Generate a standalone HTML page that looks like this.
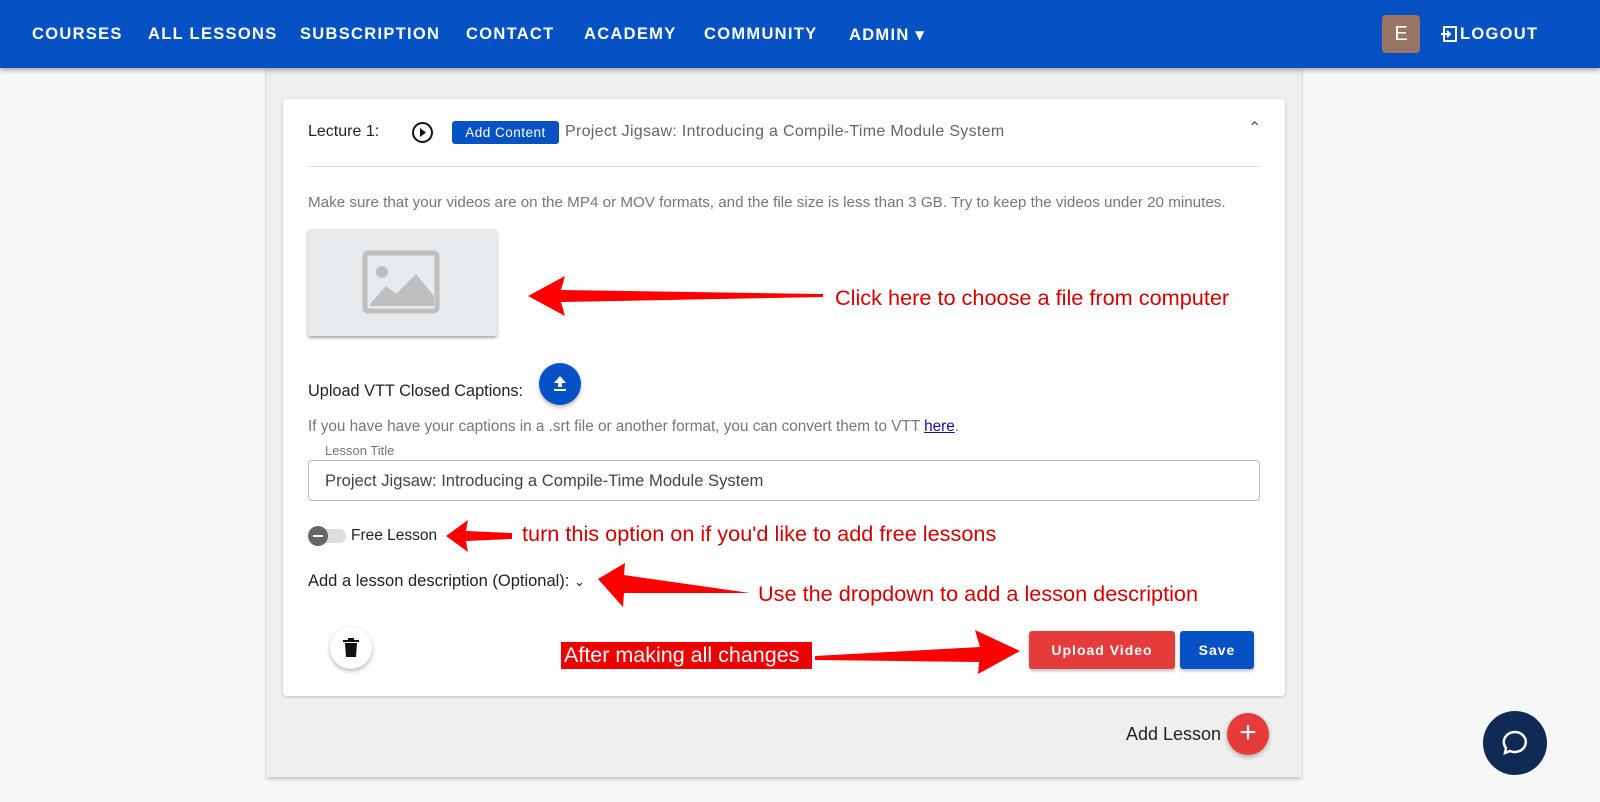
<!DOCTYPE html>
<html><head><meta charset="utf-8"><style>
*{box-sizing:border-box;margin:0;padding:0}
body{width:1600px;height:802px;overflow:hidden;background:#f7f7f7;font-family:"Liberation Sans",sans-serif;position:relative}
.nav{position:absolute;left:0;top:0;width:1600px;height:68px;background:#0652c4;box-shadow:0 2px 5px rgba(0,0,0,.35);z-index:5}
.nav span{position:absolute;top:25px;color:#fff;font-weight:bold;font-size:16.5px;letter-spacing:1.3px}
.panel{position:absolute;left:267px;top:40px;width:1034px;height:737px;background:#efefef;box-shadow:0 2px 4px rgba(0,0,0,.25)}
.card{position:absolute;left:283px;top:99px;width:1002px;height:597px;background:#fff;border-radius:4px;box-shadow:0 1px 3px rgba(0,0,0,.2)}
.t{position:absolute;white-space:nowrap}
.red{color:#d40000;font-size:21.7px}
</style></head><body>
<div class="nav">
<span style="left:32px">COURSES</span><span style="left:148px">ALL LESSONS</span><span style="left:300px">SUBSCRIPTION</span><span style="left:466px">CONTACT</span><span style="left:584px">ACADEMY</span><span style="left:704px">COMMUNITY</span><span style="left:849px">ADMIN ▾</span>
<div style="position:absolute;left:1382px;top:15px;width:38px;height:38px;background:#9a7565;border-radius:4px;color:#fff;font-size:20px;text-align:center;line-height:38px">E</div>
<svg style="position:absolute;left:1440px;top:25px" width="18" height="18" viewBox="0 0 18 18"><rect x="4" y="2" width="12" height="14" fill="none" stroke="#fff" stroke-width="2"/><path d="M1 9h9M7 6l3 3-3 3" stroke="#fff" stroke-width="2" fill="none"/></svg>
<span style="left:1460px">LOGOUT</span>
</div>
<div class="panel"></div>
<div class="card"></div>
<div class="t" style="left:308px;top:123px;font-size:16px;color:#222">Lecture 1:</div>
<svg class="t" style="left:411px;top:121px" width="23" height="23"><circle cx="11.5" cy="11.5" r="9.5" fill="none" stroke="#111" stroke-width="2"/><path d="M9 7l6 4.5-6 4.5z" fill="#111"/></svg>
<div class="t" style="left:452px;top:121px;width:107px;height:23px;background:#0652c4;border-radius:3px;color:#fff;font-size:13.5px;text-align:center;line-height:23px;letter-spacing:.5px">Add Content</div>
<div class="t" style="left:565px;top:123px;font-size:16px;letter-spacing:.3px;color:#666">Project Jigsaw: Introducing a Compile-Time Module System</div>
<div class="t" style="left:1248px;top:118px;font-size:16px;color:#555">&#8963;</div>
<div class="t" style="left:308px;top:166px;width:952px;height:1px;background:#ddd"></div>
<div class="t" style="left:308px;top:194px;font-size:15.2px;color:#777">Make sure that your videos are on the MP4 or MOV formats, and the file size is less than 3 GB. Try to keep the videos under 20 minutes.</div>
<div class="t" style="left:308px;top:229px;width:189px;height:107px;background:#e8ebee;border-radius:3px;box-shadow:0 2px 3px rgba(0,0,0,.35)"></div>
<svg class="t" style="left:362px;top:250px" width="80" height="64"><rect x="3" y="3" width="72" height="58" fill="none" stroke="#bdbfc1" stroke-width="5" rx="3"/><circle cx="20" cy="22" r="6" fill="#bdbfc1"/><path d="M8 54L24 36 34 44 54 24 72 46V56H8z" fill="#bdbfc1"/></svg>
<svg class="t" style="left:528px;top:276px" width="295" height="42"><path d="M0 20L37 0 33 14 295 18 295 21 33 26 37 40z" fill="#f00"/></svg>
<div class="t red" style="left:835px;top:285px">Click here to choose a file from computer</div>
<div class="t" style="left:308px;top:382px;font-size:16.3px;color:#222">Upload VTT Closed Captions:</div>
<div class="t" style="left:539px;top:363px;width:42px;height:42px;border-radius:50%;background:#0652c4;box-shadow:0 2px 4px rgba(0,0,0,.3)"></div>
<svg class="t" style="left:550px;top:373px" width="20" height="20"><path d="M10 3l6 7h-4v4H8v-4H4z M4 16h12v2H4z" fill="#fff"/></svg>
<div class="t" style="left:308px;top:418px;font-size:15.3px;color:#777">If you have have your captions in a .srt file or another format, you can convert them to VTT <u style="color:#1a0dab">here</u>.</div>
<div class="t" style="left:308px;top:460px;width:952px;height:41px;border:1px solid #bbb;border-radius:4px"></div>
<div class="t" style="left:320px;top:443px;font-size:13px;color:#777;background:#fff;padding:0 5px">Lesson Title</div>
<div class="t" style="left:325px;top:471px;font-size:16.6px;color:#444">Project Jigsaw: Introducing a Compile-Time Module System</div>
<div class="t" style="left:310px;top:529px;width:36px;height:14px;border-radius:7px;background:#ddd"></div>
<div class="t" style="left:308px;top:526px;width:20px;height:20px;border-radius:50%;background:#666"></div>
<div class="t" style="left:313px;top:535px;width:10px;height:2px;background:#fff"></div>
<div class="t" style="left:351px;top:527px;font-size:15.5px;color:#222">Free Lesson</div>
<svg class="t" style="left:446px;top:520px" width="66" height="32"><path d="M0 16L22 0 20 11 66 13 66 19 20 21 22 32z" fill="#f00"/></svg>
<div class="t red" style="left:522px;top:521px">turn this option on if you'd like to add free lessons</div>
<div class="t" style="left:308px;top:572px;font-size:16.5px;color:#222">Add a lesson description (Optional): <span style="font-size:13px">&#8964;</span></div>
<svg class="t" style="left:598px;top:563px" width="152" height="44"><path d="M0 16L27 0 26 12 152 30 26 30 25 44z" fill="#f00"/></svg>
<div class="t red" style="left:758px;top:581px">Use the dropdown to add a lesson description</div>
<div class="t" style="left:330px;top:627px;width:42px;height:42px;border-radius:50%;background:#fff;box-shadow:0 2px 5px rgba(0,0,0,.3)"></div>
<svg class="t" style="left:343px;top:638px" width="16" height="20"><rect x="0" y="2" width="16" height="2" fill="#111"/><rect x="5" y="0" width="6" height="3" fill="#111"/><path d="M2 5h12l-1 14H3z" fill="#111"/></svg>
<div class="t" style="left:561px;top:642px;width:251px;height:27px;background:#e00;color:#fff;font-size:21.5px;line-height:27px;padding-left:3px">After making all changes</div>
<svg class="t" style="left:815px;top:630px" width="205" height="44"><path d="M0 26L165 17 160 0 205 21 163 44 164 32 0 30z" fill="#f00"/></svg>
<div class="t" style="left:1029px;top:631px;width:146px;height:38px;background:#e53b3b;border-radius:3px;color:#fff;font-size:14px;font-weight:bold;text-align:center;line-height:38px;letter-spacing:1px;box-shadow:0 2px 3px rgba(0,0,0,.25)">Upload Video</div>
<div class="t" style="left:1180px;top:631px;width:74px;height:38px;background:#0652c4;border-radius:3px;color:#fff;font-size:14px;font-weight:bold;text-align:center;line-height:38px;letter-spacing:1px;box-shadow:0 2px 3px rgba(0,0,0,.25)">Save</div>
<div class="t" style="left:1126px;top:724px;font-size:18px;color:#222">Add Lesson</div>
<div class="t" style="left:1227px;top:713px;width:42px;height:42px;border-radius:50%;background:#e53b3b;color:#fff;font-size:30px;text-align:center;line-height:40px;box-shadow:0 2px 5px rgba(0,0,0,.3)">+</div>
<div class="t" style="left:1483px;top:711px;width:64px;height:64px;border-radius:50%;background:#0e2a55"></div>
<svg class="t" style="left:1501px;top:729px" width="28" height="28"><path d="M14 3a11 10 0 1 1-5 19l-5 2 1-5A11 10 0 0 1 14 3z" fill="none" stroke="#fff" stroke-width="2.5"/></svg>
</body></html>
